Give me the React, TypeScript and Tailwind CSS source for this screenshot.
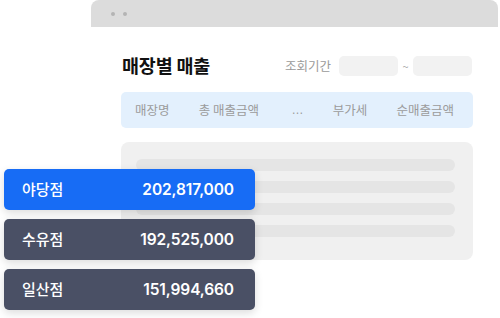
import { useMemo } from 'react'

const font = { fontFamily: '"Noto Sans CJK KR", "Noto Sans", sans-serif' }

function StoreCard({ name, amount, active }: { name: string; amount: string; active?: boolean }) {
  return (
    <div
      className={`flex h-[41px] w-[251px] items-center justify-between rounded-[5px] pl-[18px] pr-[21px] text-white shadow-[0_3px_8px_rgba(0,0,0,0.14)] ${
        active ? 'bg-[#176cf5]' : 'bg-[#4a5065]'
      }`}
    >
      <span className="text-[15px] font-medium">{name}</span>
      <span className="font-['Inter'] text-[15.5px] font-semibold tracking-[-0.1px]">{amount}</span>
    </div>
  )
}

export default function App() {
  const stores = useMemo(() => ([
    { name: '야당점', amount: '202,817,000', active: true },
    { name: '수유점', amount: '192,525,000' },
    { name: '일산점', amount: '151,994,660' },
  ]), [])
  const columns = ['매장명', '총 매출금액', '…', '부가세', '순매출금액']

  return (
    <div className="relative h-[318px] w-[500px] overflow-hidden bg-white" style={font}>
      {/* browser window */}
      <div className="ml-[91px] w-[407px]">
        <div className="flex h-[27px] items-center gap-[8px] rounded-t-[8px] bg-[#dcdcdc] pl-[20px]">
          <span className="h-[4px] w-[4px] rounded-full bg-[#b4b4b4]" />
          <span className="h-[4px] w-[4px] rounded-full bg-[#b4b4b4]" />
        </div>
        <div className="bg-white pb-[40px] pl-[30px] pr-[25px] pt-[29px]">
          <div className="flex h-[20px] items-center pr-[1px]">
            <h1 className="ml-[1px] text-[18.5px] font-bold tracking-[-0.2px] text-[#111]">매장별 매출</h1>
            <span className="ml-auto text-[12.5px] text-[#9a9a9a]">조회기간</span>
            <div className="ml-[8px] h-[20px] w-[59px] rounded-[5px] bg-[#f2f2f2]" />
            <span className="flex w-[15px] justify-center text-[11px] text-[#aaa]">~</span>
            <div className="h-[20px] w-[59px] rounded-[5px] bg-[#f2f2f2]" />
          </div>
          <div className="mt-[16px] flex h-[36px] items-center justify-between rounded-[5px] bg-[#e3f0fd] pl-[14px] pr-[19px] text-[12.5px] text-[#9b9b9b]">
            {columns.map(c => (
              <span key={c} className={c === '…' ? "ml-[3px] font-['Liberation_Sans'] text-[12px]" : ''}>{c}</span>
            ))}
          </div>
          <div className="mt-[14px] flex h-[118px] flex-col gap-[10px] rounded-[8px] bg-[#f0f0f0] pl-[15px] pr-[18px] pt-[17px]">
            {[0, 1, 2, 3].map(i => (
              <div key={i} className="h-[12px] rounded-full bg-[#e5e5e5]" />
            ))}
          </div>
        </div>
      </div>

      {/* floating store cards */}
      <div className="absolute left-[4px] top-[169px] flex flex-col gap-[9px]">
        {stores.map(s => (
          <StoreCard key={s.name} {...s} />
        ))}
      </div>
    </div>
  )
}
